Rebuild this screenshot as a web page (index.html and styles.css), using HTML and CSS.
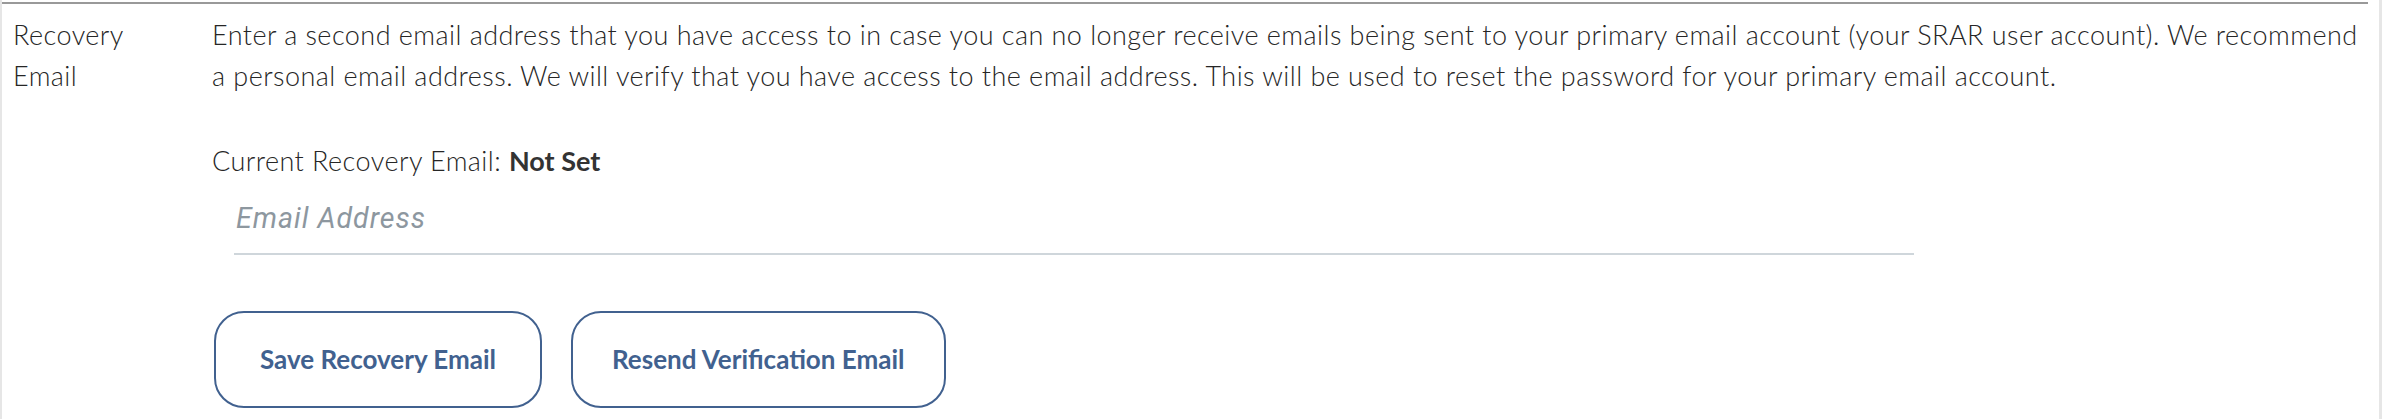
FILE: index.html
```html
<!DOCTYPE html>
<html lang="en">
<head>
<meta charset="utf-8">
<title>Recovery Email</title>
<link rel="stylesheet" href="styles.css">
</head>
<body>
<div class="panel">
  <div class="row">
    <div class="label">Recovery Email</div>
    <div class="content">
      <p class="desc">Enter a second email address that you have access to in case you can no longer receive emails being sent to your primary email account (your SRAR user account). We recommend a personal email address. We will verify that you have access to the email address. This will be used to reset the password for your primary email account.</p>
      <p class="current">Current Recovery Email: <strong>Not Set</strong></p>
      <div class="field"><input class="email-input" type="email" placeholder="Email Address"></div>
      <div class="actions">
        <button class="btn" type="button">Save Recovery Email</button>
        <button class="btn" type="button">Resend Verification Email</button>
      </div>
    </div>
  </div>
</div>
</body>
</html>
```

FILE: styles.css
```css
html, body {
  margin: 0;
  padding: 0;
  background: #ffffff;
}

body {
  font-family: "Lato", "Liberation Sans", sans-serif;
  font-weight: 300;
  font-size: 27px;
  letter-spacing: 0.45px;
  line-height: 40.5px;
  color: #262626;
}

.panel {
  height: 419px;
  box-sizing: border-box;
  border-left: 2px solid #e6e6e6;
  border-right: 3px solid #e6e6e6;
  padding-top: 2px;
}

.row {
  display: flex;
  margin-right: 11px;
  border-top: 2px solid #999999;
  padding-top: 11px;
}

.label {
  width: 150px;
  padding-left: 11px;
  margin-right: 49px;
  flex: none;
}

.content {
  flex: 1;
  min-width: 0;
  padding-right: 4px;
}

.desc {
  margin: 0 0 45px 0;
}

.current {
  margin: 0;
}

.current strong {
  font-weight: 700;
  letter-spacing: 0;
  color: #333333;
}

.field {
  margin: 3px 0 0 22px;
  width: 1680px;
}

.email-input {
  display: block;
  width: 100%;
  height: 70px;
  box-sizing: border-box;
  padding: 0 2px;
  border: none;
  border-bottom: 2px solid #cfd6db;
  outline: none;
  background: transparent;
  font-family: "Roboto", "Liberation Sans", sans-serif;
  font-style: italic;
  font-size: 28.5px;
  letter-spacing: 1px;
  color: #333333;
}

.email-input::placeholder {
  color: #8d979f;
  opacity: 1;
}

.actions {
  display: flex;
  gap: 29px;
  margin-top: 56px;
  margin-left: 2px;
}

.btn {
  height: 97px;
  min-width: 328px;
  box-sizing: border-box;
  padding: 0 39px;
  border: 2px solid #41618f;
  border-radius: 30px;
  background: #ffffff;
  color: #41618f;
  font-family: "Lato", "Liberation Sans", sans-serif;
  font-weight: 700;
  font-size: 26px;
  letter-spacing: 0;
  cursor: pointer;
}
```
